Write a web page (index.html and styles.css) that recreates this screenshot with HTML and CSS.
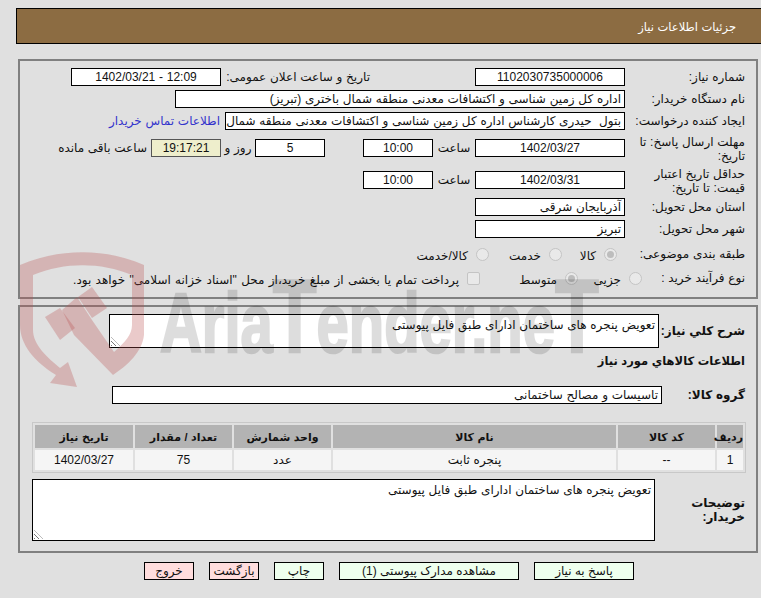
FILE: index.html
```html
<!DOCTYPE html>
<html lang="fa" dir="rtl">
<head>
<meta charset="utf-8">
<title>جزئیات اطلاعات نیاز</title>
<link rel="stylesheet" href="styles.css">
</head>
<body>
<header class="title-bar">جزئیات اطلاعات نیاز</header>
<section class="panel panel-top">
  <div class="row">
    <label class="lbl">شماره نیاز:</label>
    <div class="box w150 center">1102030735000006</div>
    <label class="lbl-mid">تاریخ و ساعت اعلان عمومی:</label>
    <div class="box w150 center ltr">1402/03/21 - 12:09</div>
  </div>
  <div class="row">
    <label class="lbl">نام دستگاه خریدار:</label>
    <div class="box w450">اداره کل زمین شناسی و اکتشافات معدنی منطقه شمال باختری (تبریز)</div>
  </div>
  <div class="row">
    <label class="lbl">ایجاد کننده درخواست:</label>
    <div class="box w400">بتول  حیدری کارشناس اداره کل زمین شناسی و اکتشافات معدنی منطقه شمال</div>
    <a class="link">اطلاعات تماس خریدار</a>
  </div>
  <div class="row tall">
    <label class="lbl">مهلت ارسال پاسخ: تا تاریخ:</label>
    <div class="box w150 center">1402/03/27</div>
    <span class="unit">ساعت</span>
    <div class="box w70 center">10:00</div>
    <span class="gap38"></span>
    <div class="box w70 center">5</div>
    <span class="days">روز و</span>
    <div class="box timer center">19:17:21</div>
    <span class="remain">ساعت باقی مانده</span>
  </div>
  <div class="row tall">
    <label class="lbl">حداقل تاریخ اعتبار قیمت: تا تاریخ:</label>
    <div class="box w150 center">1402/03/31</div>
    <span class="unit">ساعت</span>
    <div class="box w70 center">10:00</div>
  </div>
  <div class="row">
    <label class="lbl">استان محل تحویل:</label>
    <div class="box w150">آذربایجان شرقی</div>
  </div>
  <div class="row">
    <label class="lbl">شهر محل تحویل:</label>
    <div class="box w150">تبریز</div>
  </div>
  <div class="row r8">
    <label class="lbl">طبقه بندی موضوعی:</label>
    <div class="choices">
      <span class="choice c1"><i class="radio on"></i><span class="ctext">کالا</span></span>
      <span class="choice c2"><i class="radio"></i><span class="ctext">خدمت</span></span>
      <span class="choice"><i class="radio"></i><span class="ctext">کالا/خدمت</span></span>
    </div>
  </div>
  <div class="row r9">
    <label class="lbl lbl-short">نوع فرآیند خرید :</label>
    <div class="choices">
      <span class="choice c3"><i class="radio"></i><span class="ctext">جزیی</span></span>
      <span class="choice c4"><i class="radio on"></i><span class="ctext">متوسط</span></span>
      <span class="choice"><i class="check"></i><span class="ctext long">پرداخت تمام یا بخشی از مبلغ خرید،از محل "اسناد خزانه اسلامی" خواهد بود.</span></span>
    </div>
  </div>
</section>
<section class="panel panel-bottom">
  <div class="row r-desc">
    <label class="lbl lbl-desc bold">شرح کلي نیاز:</label>
    <div class="box area area-a">تعویض پنجره های ساختمان ادارای طبق فایل پیوستی<i class="grip"></i></div>
  </div>
  <h2 class="sub">اطلاعات کالاهاي مورد نیاز</h2>
  <div class="row r-group">
    <label class="lbl lbl-group bold">گروه کالا:</label>
    <div class="box w550">تاسیسات و مصالح ساختمانی</div>
  </div>
  <table class="items">
    <thead>
      <tr><th class="c-a">ردیف</th><th class="c-b">کد کالا</th><th class="c-c">نام کالا</th><th class="c-d">واحد شمارش</th><th class="c-e">تعداد / مقدار</th><th class="c-f">تاریخ نیاز</th></tr>
    </thead>
    <tbody>
      <tr><td>1</td><td>--</td><td>پنجره ثابت</td><td>عدد</td><td>75</td><td>1402/03/27</td></tr>
    </tbody>
  </table>
  <div class="row r-notes">
    <label class="lbl lbl-notes bold">توضیحات خریدار:</label>
    <div class="box area area-b">تعویض پنجره های ساختمان ادارای طبق فایل پیوستی<i class="grip"></i></div>
  </div>
</section>
<nav class="actions">
  <button class="btn green w100">پاسخ به نیاز</button>
  <button class="btn green w180">مشاهده مدارک پیوستی (1)</button>
  <button class="btn green w50">چاپ</button>
  <button class="btn red w50">بازگشت</button>
  <button class="btn red w50">خروج</button>
</nav>
<div class="watermark" aria-hidden="true">
  <svg width="761" height="160" viewBox="0 240 761 160">
    <path class="wm-red" d="M20 265 C60 248 105 248 144 265 L144 335 C142 352 128 365 113 375 L74 335 L62 310 L77 297 L92 320 L114 352 C125 342 132 335 132 325 L132 275 C100 262 65 262 33 275 L33 330 C33 345 48 358 60 368 L68 362 L77 387 L50 383 L56 375 C35 362 20 345 20 325 Z"/>
    <path class="wm-red" d="M45 317 L60 308 L75 328 L60 340 Z"/>
    <path class="wm-red" d="M78 297 L92 287 L107 308 L92 318 Z"/>
    <text class="wm-text" transform="translate(160 352) scale(.69 1)">Aria<tspan class="wm-big">T</tspan>ender.ne<tspan class="wm-big">T</tspan></text>
  </svg>
</div>
</body>
</html>
```
FILE: styles.css
```css
* { box-sizing: border-box; }
html, body { margin: 0; height: 598px; overflow: hidden; }
body {
  position: relative;
  background: #e0e0e0;
  color: #111;
  font: 12px/14px "Liberation Sans", "DejaVu Sans", sans-serif;
  word-spacing: .4px;
  padding: 8px 0 0;
}
.title-bar {
  margin-left: 16px;
  height: 36px;
  background: #8c6c42;
  border: 1px solid #000;
  border-right: 0;
  color: #fff;
  padding: 11px 25px 0 0;
  font-size: 11.5px;
  line-height: 15px;
}
.panel {
  width: 740px;
  margin-right: 3px;
  border: 2px solid #808080;
  padding: 7px 0 0;
}
.panel-top { margin-top: 15px; height: 240px; }
.panel-bottom { margin-top: 6px; height: 248px; }
.row { display: flex; align-items: center; min-height: 18px; margin-bottom: 4px; }
.tall { min-height: 28px; }
.tall .lbl { height: 28px; padding-top: 2px; line-height: 13.5px; }
.lbl { width: 131px; padding-right: 11px; flex: none; }
.lbl-short { width: 106px; }
.lbl-desc { width: 97px; }
.lbl-group { width: 94px; }
.lbl-notes { width: 101px; }
.box {
  height: 18px;
  border: 1px solid #000;
  background: #fff;
  padding: 0 3px;
  line-height: 16px;
  white-space: pre;
  overflow: hidden;
  flex: none;
}
.center { text-align: center; }
.ltr { direction: ltr; }
.w150 { width: 150px; }
.w70 { width: 70px; }
.w450 { width: 450px; }
.w400 { width: 400px; }
.w550 { width: 550px; }
.lbl-mid { width: 254px; padding-right: 105px; white-space: nowrap; flex: none; }
.link { color: #33c; margin-right: 5px; white-space: nowrap; }
.unit { width: 42px; text-align: center; flex: none; }
.gap38 { width: 38px; flex: none; }
.days { width: 34px; text-align: center; flex: none; }
.timer { width: 70px; background: #eeeecc; border-color: #555; }
.remain { margin-right: 4px; white-space: nowrap; }
.r8 { margin-top: 7px; margin-bottom: 6px; }
.choices { display: flex; align-items: center; }
.choice { display: inline-flex; align-items: center; white-space: nowrap; }
.ctext { padding-top: 3px; }
.long { word-spacing: 1px; }
.c1 { width: 55px; }
.c2 { width: 73px; }
.c3 { width: 64px; }
.c4 { width: 98px; }
.radio, .check {
  display: inline-block;
  flex: none;
  width: 13px;
  height: 13px;
  background: #e9e9e9;
  border: 1px solid #c4c4c4;
  margin: 0 8px 0 8px;
}
.radio { border-radius: 50%; position: relative; }
.radio.on::after { content: ""; position: absolute; inset: 2px; border-radius: 50%; background: #bdbdbd; }
.check { border-radius: 2px; }
.bold { font-weight: bold; }
.r-desc { margin-bottom: 0; }
.area { position: relative; white-space: normal; line-height: 15px; padding-top: 3px; }
.area-a { width: 550px; height: 34px; }
.sub { font-size: 11.5px; line-height: 15px; margin: 6px 11px 17px 0; }
.r-group { margin-bottom: 18px; }
.grip {
  position: absolute;
  left: 1px;
  bottom: 1px;
  width: 9px;
  height: 9px;
  background: repeating-linear-gradient(45deg, #777 0 1px, #fff 1px 3px);
  clip-path: polygon(0 0, 100% 100%, 0 100%);
}
.items {
  width: 714px;
  margin: 0 10px 6px 0;
  border: 1px solid #c8c8c8;
  border-spacing: 2px;
  table-layout: fixed;
  background: #e0e0e0;
  text-align: center;
}
.items th { background: #b3b3b3; height: 23px; padding: 0; font-size: 11px; }
.items td { background: #f5f5f5; height: 20px; padding: 0; font-size: 12px; }
.c-a { width: 26px; }
.c-b { width: 97px; }
.c-c { width: 283px; }
.c-d { width: 97px; }
.c-e { width: 97px; }
.c-f { width: 98px; }
.area-b { width: 623px; height: 62px; }
.actions { display: flex; gap: 15px; margin: 9px 127px 0 0; }
.btn {
  height: 18px;
  padding: 0;
  border: 1px solid #000;
  font: 12px/15px "Liberation Sans", "DejaVu Sans", sans-serif;
  color: #111;
}
.green { background: #eeffee; }
.red { background: #ffdddd; }
.w100 { width: 100px; }
.w180 { width: 180px; }
.w50 { width: 50px; }
.watermark { position: absolute; left: 0; top: 240px; pointer-events: none; direction: ltr; }
.watermark svg { display: block; }
.wm-red { fill: #b85050; fill-opacity: .3; }
.wm-text { font: bold 84px "Liberation Sans", sans-serif; fill: #000; stroke: #000; stroke-width: 2.5px; opacity: .13; }
.wm-big { font-size: 104px; }
```
